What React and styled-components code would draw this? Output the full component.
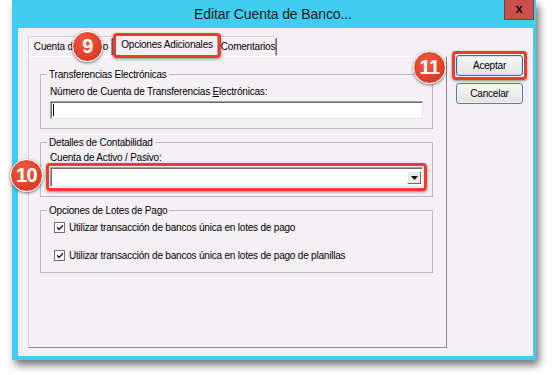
import React from "react";
import styled, { createGlobalStyle } from "styled-components";

const GlobalStyle = createGlobalStyle`
  html, body {
    margin: 0;
    padding: 0;
    background: #ffffff;
  }
  body {
    font-family: "Liberation Sans", Arial, sans-serif;
    font-size: 10px;
    letter-spacing: -0.2px;
    color: #000;
  }
`;

const CheckIcon = () => (
  <svg width="8" height="8" viewBox="0 0 8 8">
    <path d="M1 3.5 L3 5.5 L7 1.5 L7 3.2 L3 7.2 L1 5.2 Z" fill="#000" />
  </svg>
);

function Checkbox({ label }) {
  return (
    <CheckRow>
      <CheckBox>
        <CheckIcon />
      </CheckBox>
      <span>{label}</span>
    </CheckRow>
  );
}

export default function App() {
  return (
    <>
      <GlobalStyle />
      <Page>
        <Window>
          <TitleBar>
            <span />
            <Title>Editar Cuenta de Banco...</Title>
            <CloseButton>x</CloseButton>
          </TitleBar>
          <Frame>
            <Client>
              <TabControl>
                <TabStrip>
                  <Tab $w={84}>Cuenta de Banco</Tab>
                  <Marked $out={2}>
                    <Tab $w={104} $active>
                      Opciones Adicionales
                    </Tab>
                  </Marked>
                  <Tab $w={58}>Comentarios</Tab>
                </TabStrip>
                <Panel>
                  <Group $h={55}>
                    <Legend>Transferencias Electrónicas</Legend>
                    <FieldLabel $mt={4}>
                      Número de Cuenta de Transferencias <u>E</u>lectrónicas:
                    </FieldLabel>
                    <TextInput>
                      <Caret />
                    </TextInput>
                  </Group>
                  <Group $h={55}>
                    <Legend>Detalles de Contabilidad</Legend>
                    <FieldLabel $mt={2}>Cuenta de Activo / Pasivo:</FieldLabel>
                    <Marked $out={4}>
                      <Combo>
                        <ComboArrow>
                          <svg width="7" height="4" viewBox="0 0 7 4">
                            <path d="M0 0 H7 L3.5 4 Z" fill="#000" />
                          </svg>
                        </ComboArrow>
                      </Combo>
                    </Marked>
                  </Group>
                  <Group $h={63}>
                    <Legend>Opciones de Lotes de Pago</Legend>
                    <CheckList>
                      <Checkbox label="Utilizar transacción de bancos única en lotes de pago" />
                      <Checkbox label="Utilizar transacción de bancos única en lotes de pago de planillas" />
                    </CheckList>
                  </Group>
                </Panel>
              </TabControl>
              <ButtonColumn>
                <Marked $out={4}>
                  <DialogButton $default>Aceptar</DialogButton>
                </Marked>
                <DialogButton>Cancelar</DialogButton>
              </ButtonColumn>
            </Client>
          </Frame>
        </Window>
        <Badge $x={72} $y={31} $size={31}>9</Badge>
        <Badge $x={10} $y={159} $size={33}>10</Badge>
        <Badge $x={413} $y={51} $size={33}>11</Badge>
      </Page>
    </>
  );
}

const Page = styled.div`
  position: relative;
  width: 553px;
  height: 375px;
  overflow: hidden;
  padding-left: 12px;
  box-sizing: border-box;
`;

const Window = styled.div`
  width: 524px;
  height: 360px;
  display: flex;
  flex-direction: column;
  background: #41cdf1;
  box-shadow: 3px 5px 8px rgba(0, 0, 0, 0.55);
`;

const TitleBar = styled.div`
  height: 28px;
  flex-shrink: 0;
  display: grid;
  grid-template-columns: 1fr auto 1fr;
  align-items: start;
  padding-right: 2px;
`;

const Title = styled.div`
  font-family: "Liberation Sans", Arial, sans-serif;
  font-size: 14px;
  line-height: 29px;
  color: #1b1b1b;
  letter-spacing: -0.1px;
`;

const CloseButton = styled.div`
  justify-self: end;
  width: 30px;
  height: 20px;
  box-sizing: border-box;
  background: #c9504b;
  border: 1px solid #8e3a36;
  border-top: none;
  color: #111;
  font-family: "Liberation Sans", Arial, sans-serif;
  font-weight: bold;
  font-size: 13px;
  line-height: 17px;
  text-align: center;
`;

const Frame = styled.div`
  flex: 1;
  padding: 0 3px 4px 6px;
  display: flex;
`;

const Client = styled.div`
  flex: 1;
  background: #f5f0f5;
  display: flex;
  gap: 9px;
  padding: 7px 0 8px 10px;
`;

const TabControl = styled.div`
  width: 419px;
  display: flex;
  flex-direction: column;
`;

const TabStrip = styled.div`
  height: 21px;
  display: flex;
  align-items: flex-end;
  padding-left: 1px;
  position: relative;
  z-index: 1;
`;

const Tab = styled.div`
  width: ${(p) => p.$w}px;
  height: ${(p) => (p.$active ? 22 : 19)}px;
  margin: 0 ${(p) => (p.$active ? 0 : 2)}px ${(p) => (p.$active ? -1 : 0)}px 0;
  box-sizing: border-box;
  background: #f5f0f5;
  border: 1px solid;
  border-color: #ffffff #6e6e6e #f5f0f5 #ffffff;
  box-shadow: inset -1px 0 0 #a0a0a0, -1px -1px 0 #cfcbcf;
  border-radius: 2px 2px 0 0;
  text-align: center;
  line-height: ${(p) => (p.$active ? 18 : 17)}px;
  white-space: nowrap;
`;

const Marked = styled.div`
  position: relative;
  &::after {
    content: "";
    position: absolute;
    inset: -${(p) => p.$out}px;
    border: 3px solid #ee3b2c;
    border-radius: 4px;
    box-shadow: 0 1px 3px rgba(0, 0, 0, 0.45);
    pointer-events: none;
  }
`;

const Panel = styled.div`
  flex: 1;
  border: 1px solid;
  border-color: #ffffff #8a8a8a #8a8a8a #d2ced2;
  padding: 17px 13px 0 11px;
  display: flex;
  flex-direction: column;
  gap: 12px;
`;

const Group = styled.div`
  height: ${(p) => p.$h}px;
  box-sizing: border-box;
  border: 1px solid #bdb9bd;
  padding: 0 9px;
  & + & {
    margin-top: 1px;
  }
`;

const Legend = styled.div`
  width: fit-content;
  margin: -7px 0 0 -3px;
  padding: 0 2px;
  background: #f5f0f5;
  line-height: 13px;
`;

const FieldLabel = styled.div`
  margin-top: ${(p) => p.$mt}px;
  line-height: 13px;
  u {
    text-decoration-thickness: 1px;
  }
`;

const TextInput = styled.div`
  margin-top: 3px;
  height: 18px;
  box-sizing: border-box;
  background: #fff;
  border: 1px solid;
  border-color: #a0a0a0 #e3e3e3 #e3e3e3 #a0a0a0;
  box-shadow: inset 1px 1px 0 #6e6e6e;
  padding: 2px 0 0 2px;
`;

const Caret = styled.div`
  width: 1px;
  height: 12px;
  background: #000;
`;

const Combo = styled.div`
  margin-top: 3px;
  height: 20px;
  box-sizing: border-box;
  background: #fff;
  border: 1px solid;
  border-color: #a0a0a0 #e3e3e3 #e3e3e3 #a0a0a0;
  box-shadow: inset 1px 1px 0 #6e6e6e;
  display: flex;
  justify-content: flex-end;
  align-items: flex-end;
  padding: 0 1px 2px 0;
`;

const ComboArrow = styled.div`
  width: 14px;
  height: 13px;
  box-sizing: border-box;
  background: #ece9ec;
  border: 1px solid;
  border-color: #fff #6e6e6e #6e6e6e #fff;
  display: flex;
  align-items: center;
  justify-content: center;
`;

const CheckList = styled.div`
  margin-top: 3px;
  padding-left: 4px;
  display: flex;
  flex-direction: column;
  gap: 14px;
`;

const CheckRow = styled.div`
  height: 14px;
  display: flex;
  align-items: center;
  gap: 4px;
  white-space: nowrap;
`;

const CheckBox = styled.div`
  width: 11px;
  height: 11px;
  box-sizing: border-box;
  background: #fff;
  border: 1px solid #707070;
  display: flex;
  align-items: center;
  justify-content: center;
`;

const ButtonColumn = styled.div`
  width: 67px;
  margin-top: 20px;
  display: flex;
  flex-direction: column;
  gap: 7px;
`;

const DialogButton = styled.div`
  height: 21px;
  box-sizing: border-box;
  border: 1px solid ${(p) => (p.$default ? "#2f6fa3" : "#4f82b5")};
  border-radius: 3px;
  background: linear-gradient(#f8f8f8, #e4e2e4);
  box-shadow: ${(p) => (p.$default ? "inset 0 0 0 1px #c5e3f6" : "inset 0 0 0 1px #f2f2f2")};
  text-align: center;
  line-height: 19px;
`;

const Badge = styled.div`
  position: absolute;
  z-index: 2;
  left: ${(p) => p.$x}px;
  top: ${(p) => p.$y}px;
  width: ${(p) => p.$size}px;
  height: ${(p) => p.$size}px;
  box-sizing: border-box;
  border-radius: 50%;
  border: 1.5px solid #fff;
  background: radial-gradient(circle at 40% 35%, #f45a3f, #dc3b24 70%);
  box-shadow: 0 1px 3px rgba(0, 0, 0, 0.55);
  color: #fff;
  font-family: "Liberation Sans", Arial, sans-serif;
  font-weight: bold;
  font-size: 20px;
  display: flex;
  align-items: center;
  justify-content: center;
  letter-spacing: -0.5px;
`;
